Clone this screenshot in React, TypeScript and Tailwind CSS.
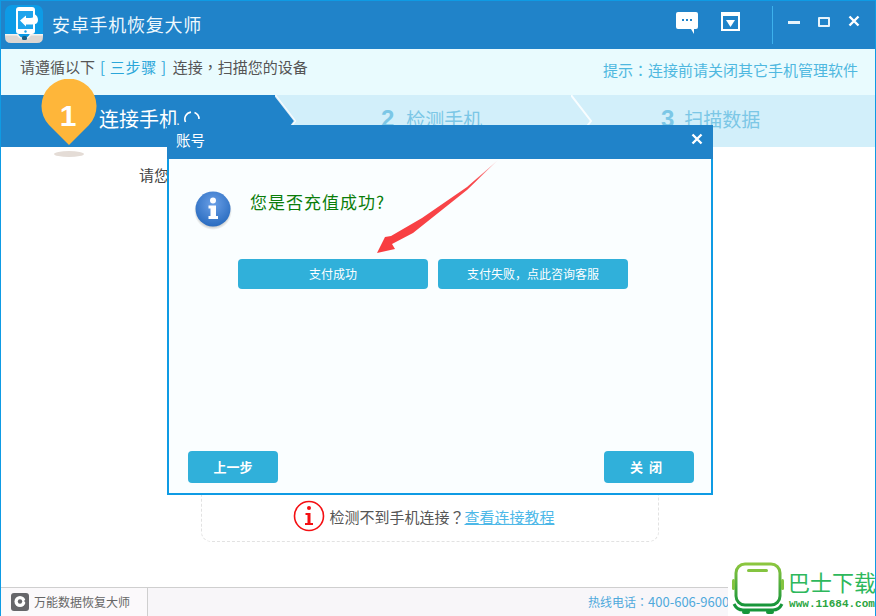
import React from "react";

const cjk = { fontFamily: '"Noto Sans CJK SC", "Liberation Sans", sans-serif' };
const tc = { fontFamily: '"Noto Sans CJK TC", "Liberation Sans", sans-serif' };

function Chevron({ fill }: { fill: string }) {
  return (
    <svg width="22" height="52" viewBox="0 0 22 52" className="shrink-0">
      <polygon points="0,0 20,26 0,52" fill={fill} />
      <polyline points="0,0 20,26 0,52" fill="none" stroke="#ffffff" strokeOpacity="0.85" strokeWidth="2" />
    </svg>
  );
}

function AppLogo() {
  return (
    <svg width="38" height="38" viewBox="0 0 38 38">
      <rect x="0" y="0" width="38" height="36" rx="7" fill="#0d9be6" />
      <path d="M0 29 H13 Q15 33 19 33 Q23 33 25 29 H38 V32 Q38 38 32 38 H6 Q0 38 0 32 Z" fill="#dcd6d2" />
      <path d="M0 29 H13 Q15 33 19 33 Q23 33 25 29 H38 V30.500 H26 Q24 34 19 34 Q14 34 12 30.500 H0 Z" fill="#f4f2f0" />
      <rect x="11" y="2" width="19" height="27" rx="3" fill="#ffffff" />
      <rect x="13" y="6" width="15" height="18" fill="#1ea4ec" />
      <circle cx="20.500" cy="26.500" r="1.200" fill="#1ea4ec" />
      <path d="M15 15.500 L21 10.500 V13 H25 Q30 13 29.500 9 Q33 11 33 15 Q33 19.500 27 19.500 H21 V21.500 Z" fill="#ffffff" />
      <rect x="17" y="31" width="5" height="4" rx="1.500" fill="#1c5f86" />
    </svg>
  );
}

function InfoBall() {
  return (
    <svg width="38" height="40" viewBox="0 0 38 40" className="shrink-0">
      <defs>
        <radialGradient id="ball" cx="50%" cy="35%" r="70%">
          <stop offset="0" stopColor="#6a9fe6" />
          <stop offset="1" stopColor="#2468bd" />
        </radialGradient>
        <radialGradient id="shade" cx="50%" cy="50%" r="50%">
          <stop offset="0.7" stopColor="#555" stopOpacity="0.5" />
          <stop offset="1" stopColor="#555" stopOpacity="0" />
        </radialGradient>
      </defs>
      <circle cx="19" cy="20" r="19" fill="url(#shade)" />
      <circle cx="19" cy="18" r="17.500" fill="url(#ball)" />
      <circle cx="19" cy="9.500" r="3" fill="#fff" />
      <path d="M14.500 14.500 H22 V25 H24 V28 H14.500 V25 H16.500 V17.500 H14.500 Z" fill="#fff" />
    </svg>
  );
}

function RedInfo() {
  return (
    <svg width="32" height="32" viewBox="0 0 32 32" className="shrink-0">
      <circle cx="16" cy="16" r="14.500" fill="#fff" stroke="#f40f12" strokeWidth="1.600" />
      <circle cx="16" cy="8" r="2" fill="#f40f12" />
      <path d="M12.500 13 H17.500 V23 H20 V25 H12 V23 H14.500 V15 H12.500 Z" fill="#f40f12" />
    </svg>
  );
}

function Watermark() {
  return (
    <div className="absolute left-[727px] top-[561px] w-[149px] h-[55px] flex bg-white pl-[4px]">
      <svg width="52" height="55" viewBox="0 0 52 55" className="shrink-0">
        <defs>
          <linearGradient id="wm" x1="0" y1="0" x2="0" y2="1">
            <stop offset="0" stopColor="#8cc63f" />
            <stop offset="1" stopColor="#17963a" />
          </linearGradient>
        </defs>
        <rect x="4" y="3" width="44" height="41" rx="9" fill="#fff" stroke="url(#wm)" strokeWidth="3" />
        <rect x="15" y="8" width="21" height="3" rx="1.500" fill="#84c440" />
        <rect x="0" y="18" width="3" height="11" rx="1.500" fill="#84c440" />
        <rect x="49" y="18" width="3" height="11" rx="1.500" fill="#84c440" />
        <path d="M2 43 Q5 49 11 49 H41 Q47 49 50 43" fill="none" stroke="#17963a" strokeWidth="3" />
        <rect x="10" y="49" width="8" height="4" rx="2" fill="#17963a" />
        <rect x="34" y="49" width="8" height="4" rx="2" fill="#17963a" />
      </svg>
      <div className="flex flex-col items-center ml-[4px]">
        <span className="text-[22px] leading-[26px] text-[#2eb85c] mt-[7px] whitespace-nowrap" style={cjk}>巴士下载</span>
        <span className="text-[11px] leading-[14px] font-bold text-[#2aa53f] mt-[3px] whitespace-nowrap" style={{ fontFamily: '"Liberation Mono", monospace' }}>www.11684.com</span>
      </div>
    </div>
  );
}

export default function App() {
  return (
    <div className="relative w-[876px] h-[616px] overflow-hidden bg-white flex flex-col border-x border-[#0e9be4]" style={cjk}>
      {/* title bar */}
      <div className="h-[49px] shrink-0 bg-[#2083c9] border-t border-[#0e9be4] flex items-start">
        <div className="ml-[4px] mr-[9px] mt-[4px]"><AppLogo /></div>
        <span className="mt-[10px] text-[18px] leading-[26px] text-[#eef8fd] tracking-[0.75px]">安卓手机恢复大师</span>
        <div className="ml-auto flex items-start">
          <svg width="22" height="22" viewBox="0 0 22 22" className="mr-[23px] mt-[11px]">
            <path d="M2 0 H20 Q22 0 22 2 V15 Q22 17 20 17 H18 V22 L15 17 H2 Q0 17 0 15 V2 Q0 0 2 0 Z" fill="#fff" />
            <rect x="6" y="7" width="2" height="2" fill="#2083c9" />
            <rect x="10" y="7" width="2" height="2" fill="#2083c9" />
            <rect x="14" y="7" width="2" height="2" fill="#2083c9" />
          </svg>
          <svg width="19" height="19" viewBox="0 0 19 19" className="mr-[32px] mt-[11px]">
            <rect x="1" y="1" width="17" height="17" fill="none" stroke="#fff" strokeWidth="2" />
            <rect x="2" y="2" width="15" height="2" fill="#fff" />
            <polygon points="5,8 14,8 9.500,15" fill="#fff" />
          </svg>
          <div className="w-px h-[38px] bg-[#3db1ec] mr-[15px] mt-[5px]" />
          <div className="w-[12px] h-[3px] bg-[#e6f3fb] mr-[18px] mt-[20px]" />
          <div className="w-[12px] h-[10px] border-2 border-[#e6f3fb] rounded-[1px] mr-[18px] mt-[16px]" />
          <svg width="12" height="12" viewBox="0 0 12 12" className="mr-[15px] mt-[14px]">
            <path d="M1.500 1.500 L10.500 10.500 M10.500 1.500 L1.500 10.500" stroke="#fff" strokeWidth="2.400" />
          </svg>
        </div>
      </div>

      {/* hint bar */}
      <div className="h-[46px] shrink-0 bg-[#e9fbfe] flex items-start justify-between pl-[19px] pr-[17px]">
        <span className="mt-[7px] text-[15px] leading-[22px] text-[#555] whitespace-nowrap">
          请遵循以下<span className="text-[#2ba6d9] ml-[5px] mr-[6px] tracking-[0.7px]">[ 三步骤 ]</span>连接<span style={tc}>，</span>扫描您的设备
        </span>
        <span className="mt-[10px] text-[15px] leading-[22px] text-[#4fb8e0] whitespace-nowrap">提示<span style={tc}>：</span>连接前请关闭其它手机管理软件</span>
      </div>

      {/* steps */}
      <div className="h-[52px] shrink-0 bg-[#d2effa] flex items-center">
        <div className="w-[274px] h-full bg-[#2083c9] flex items-center pl-[98px] pb-[4px] text-white text-[20px] gap-[5px]">
          <span>连接手机</span>
          <svg width="16" height="16" viewBox="0 0 16 16" className="shrink-0">
            <path d="M1.500 11 A7 7 0 0 1 7 1.100 M10.500 1.500 A7 7 0 0 1 15 8" fill="none" stroke="#fff" strokeWidth="1.600" />
          </svg>
        </div>
        <Chevron fill="#2083c9" />
        <div className="w-[274px] h-full flex items-center pl-[84px] pb-[4px] text-[#7cc7e6] text-[19px] gap-[12px]">
          <span className="text-[24px] font-bold" style={{ fontFamily: '"Liberation Sans", sans-serif' }}>2</span>
          <span>检测手机</span>
        </div>
        <Chevron fill="#d2effa" />
        <div className="flex-1 h-full flex items-center pl-[68px] pb-[4px] text-[#7cc7e6] text-[19px] gap-[10px]">
          <span className="text-[24px] font-bold" style={{ fontFamily: '"Liberation Sans", sans-serif' }}>3</span>
          <span>扫描数据</span>
        </div>
      </div>

      {/* content */}
      <div className="flex-1 flex flex-col bg-white relative">
        <div className="w-full pl-[138px] pt-[17px] text-[15px] leading-[22px] text-[#444]">请您按照提示连接手机</div>
        <div className="mt-auto mb-[45px] ml-[200px] w-[458px] h-[120px] border border-dashed border-[#e2e2e2] rounded-[10px] flex items-end justify-center pr-[12px] pb-[9px] gap-[4px] text-[15px] text-[#555]">
          <RedInfo />
          <span className="leading-[30px] whitespace-nowrap">检测不到手机连接<span style={tc}>？</span><span className="text-[#4db8e8] underline">查看连接教程</span></span>
        </div>
      </div>

      {/* footer */}
      <div className="h-[29px] shrink-0 border-t border-[#cfcfcf] bg-[#f8f6f9] flex items-center">
        <div className="w-[147px] h-full border-r border-[#cfcfcf] flex items-center pl-[10px] gap-[5px] bg-white/40">
          <svg width="18" height="18" viewBox="0 0 18 18">
            <rect width="18" height="18" rx="3" fill="#66666a" />
            <circle cx="9" cy="8.500" r="5.500" fill="#fff" />
            <circle cx="9" cy="8.500" r="2.200" fill="#66666a" />
            <polygon points="13,8 16,5 16,11" fill="#66666a" />
          </svg>
          <span className="text-[12px] text-[#666]">万能数据恢复大师</span>
        </div>
        <span className="ml-[440px] text-[12px] text-[#4fa9dc] whitespace-nowrap">热线电话<span style={tc}>：</span><span className="text-[13px]">400-606-9600</span></span>
      </div>

      {/* pin */}
      <svg width="56" height="80" viewBox="0 0 56 80" className="absolute left-[40px] top-[79px]">
        <path d="M28 66 L8 46 A27.500 27.500 0 1 1 48 46 Z" fill="#feb63a" />
        <ellipse cx="28" cy="75" rx="15" ry="3" fill="#e4dcd6" />
        <text x="27" y="47" textAnchor="middle" fontSize="30" fontWeight="700" fill="#fff" fontFamily="Liberation Sans, sans-serif">1</text>
      </svg>

      {/* modal */}
      <div className="absolute left-[166px] top-[125px] w-[546px] h-[370px] border-2 border-t-0 border-[#0e9be4] flex flex-col bg-[#fafeff]">
        <div className="-mx-[2px] h-[34px] shrink-0 bg-[#2083c9] flex items-start justify-between pl-[9px] pr-[10px]">
          <span className="mt-[4px] text-[14.500px] leading-[22px] text-white">账号</span>
          <svg width="12" height="12" viewBox="0 0 12 12" className="mt-[8px]">
            <path d="M1.500 1.500 L10.500 10.500 M10.500 1.500 L1.500 10.500" stroke="#fff" strokeWidth="2.400" />
          </svg>
        </div>
        <div className="flex items-start pl-[25px] pt-[32px]">
          <InfoBall />
          <span className="ml-[18px] mt-[-1px] text-[17px] leading-[24px] tracking-[1px] text-[#0a7d0a]">您是否充值成功?</span>
        </div>
        <div className="flex gap-[10px] mt-[28px] pl-[69px]">
          <button className="w-[190px] h-[30px] rounded-[4px] bg-[#30b0da] text-white text-[12px]">支付成功</button>
          <button className="w-[190px] h-[30px] rounded-[4px] bg-[#30b0da] text-white text-[12px]">支付失败，点此咨询客服</button>
        </div>
        <div className="mt-auto mb-[10px] flex justify-between pl-[19px] pr-[17px]">
          <button className="w-[90px] h-[32px] rounded-[4px] bg-[#30b0da] text-white text-[13px] font-bold">上一步</button>
          <button className="w-[90px] h-[32px] rounded-[4px] bg-[#30b0da] text-white text-[13px] font-bold tracking-[6px]">关闭</button>
        </div>
      </div>

      {/* red annotation arrow */}
      <svg width="130" height="105" viewBox="0 0 130 105" className="absolute left-[371px] top-[155px]">
        <defs>
          <linearGradient id="arrowFade" x1="126" y1="5" x2="5" y2="98" gradientUnits="userSpaceOnUse">
            <stop offset="0" stopColor="#fbd5d8" />
            <stop offset="0.2" stopColor="#f8484c" />
            <stop offset="1" stopColor="#f83c3f" />
          </linearGradient>
        </defs>
        <polygon points="126,5 95,32 50,63 19,81 13,82 5,98 23,94 20,89 41,78 95,35" fill="url(#arrowFade)" />
      </svg>

      <Watermark />
    </div>
  );
}
